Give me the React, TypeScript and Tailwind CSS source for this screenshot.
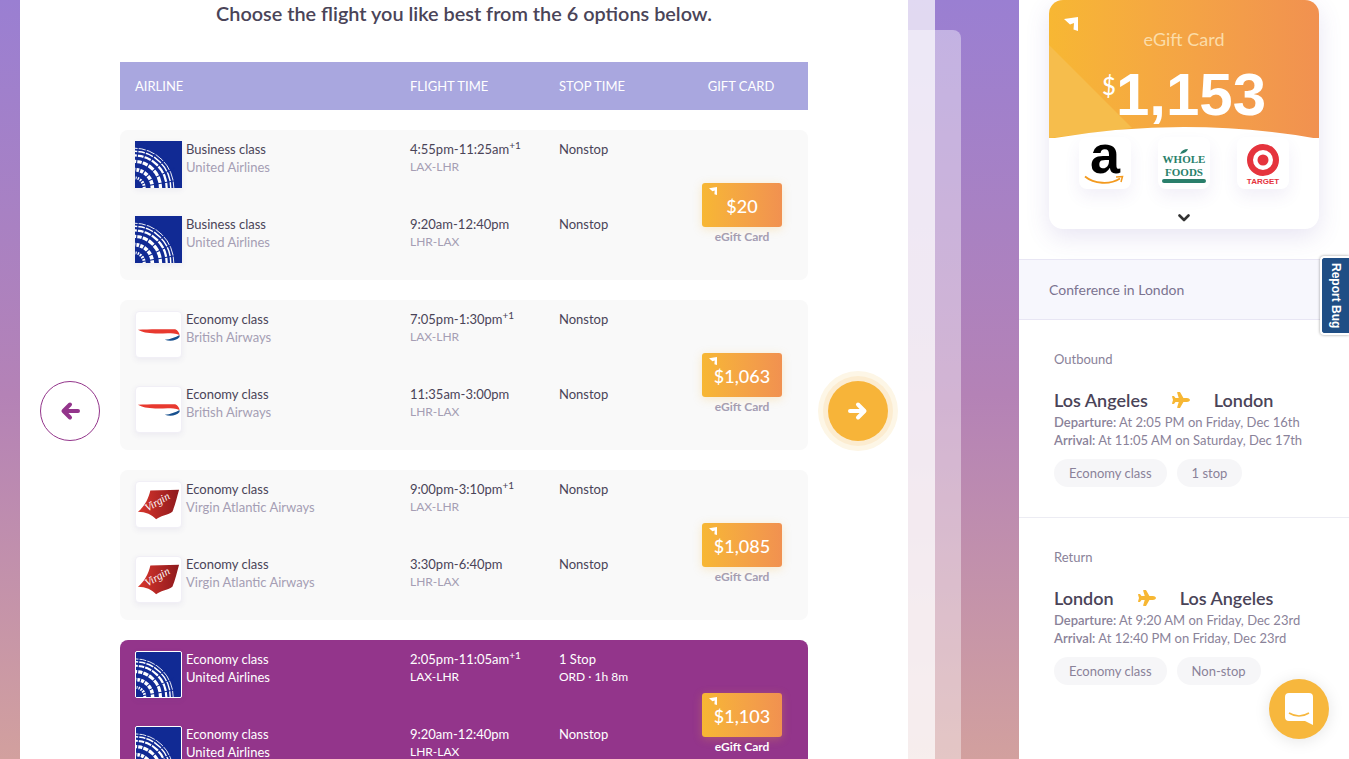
import { FaPlane } from "react-icons/fa";

type Leg = { time: string; plus?: boolean; route: string; stop: string; stopNote?: string };
type Option = { cabin: string; airline: string; logo: "united" | "ba" | "virgin"; price: string; legs: Leg[]; active?: boolean };

const options: Option[] = [
  {
    cabin: "Business class",
    airline: "United Airlines",
    logo: "united",
    price: "$20",
    legs: [
      { time: "4:55pm-11:25am", plus: true, route: "LAX-LHR", stop: "Nonstop" },
      { time: "9:20am-12:40pm", route: "LHR-LAX", stop: "Nonstop" },
    ],
  },
  {
    cabin: "Economy class",
    airline: "British Airways",
    logo: "ba",
    price: "$1,063",
    legs: [
      { time: "7:05pm-1:30pm", plus: true, route: "LAX-LHR", stop: "Nonstop" },
      { time: "11:35am-3:00pm", route: "LHR-LAX", stop: "Nonstop" },
    ],
  },
  {
    cabin: "Economy class",
    airline: "Virgin Atlantic Airways",
    logo: "virgin",
    price: "$1,085",
    legs: [
      { time: "9:00pm-3:10pm", plus: true, route: "LAX-LHR", stop: "Nonstop" },
      { time: "3:30pm-6:40pm", route: "LHR-LAX", stop: "Nonstop" },
    ],
  },
  {
    cabin: "Economy class",
    airline: "United Airlines",
    logo: "united",
    price: "$1,103",
    active: true,
    legs: [
      { time: "2:05pm-11:05am", plus: true, route: "LAX-LHR", stop: "1 Stop", stopNote: "ORD · 1h 8m" },
      { time: "9:20am-12:40pm", route: "LHR-LAX", stop: "Nonstop" },
    ],
  },
];

// globe stripes: white rings round the lower left, cut by blue spokes
const rings = [
  { r: 10, w: 3 },
  { r: 18, w: 3.6 },
  { r: 26, w: 3.2 },
  { r: 32, w: 2.2 },
  { r: 36, w: 1.4 },
  { r: 39, w: 0.9 },
];
const spokes = [10, 26, 42, 58, 72, 84];

function UnitedGlobe() {
  return (
    <svg viewBox="0 0 46 46" className="w-full h-full">
      <rect width="46" height="46" fill="#112a94" />
      <g fill="none">
        {rings.map((ring) => (
          <circle key={ring.r} cx="-1" cy="46" r={ring.r} stroke="#ffffff" strokeWidth={ring.w} />
        ))}
        {spokes.map((deg) => {
          const a = (deg * Math.PI) / 180;
          return (
            <line
              key={deg}
              x1="-1"
              y1="46"
              x2={-1 + 44 * Math.cos(a)}
              y2={46 - 44 * Math.sin(a)}
              stroke="#112a94"
              strokeWidth="1.1"
            />
          );
        })}
      </g>
    </svg>
  );
}

function AirlineLogo({ logo, active }: { logo: Option["logo"]; active?: boolean }) {
  return (
    <div
      className={`w-[47px] h-[47px] shrink-0 overflow-hidden bg-white ${
        logo === "united" ? (active ? "border border-white rounded-[2px]" : "") : "rounded-[4px] border border-[#f1eff6]"
      } shadow-[0_2px_6px_rgba(80,60,140,0.08)]`}
    >
      {logo === "united" && <UnitedGlobe />}
      {logo === "ba" && (
        <svg viewBox="0 0 47 47" className="w-full h-full">
          <path d="M2 18.5 C14 18 30 18 41 18 Q45 20 45.5 24 C36 21 28 23 20 22.5 C12 22 6 21 2 18.5Z" fill="#e8392f" />
          <path d="M30 29 C36 28.5 41 26.5 45.5 24 L45.5 26 C42 30 36 31 30 29Z" fill="#17508f" />
        </svg>
      )}
      {logo === "virgin" && (
        <svg viewBox="0 0 47 47" className="w-full h-full">
          <defs>
            <linearGradient id="virginFlag" x1="0" y1="0" x2="1" y2="0">
              <stop offset="0" stopColor="#d8352c" />
              <stop offset="1" stopColor="#8e1a1d" />
            </linearGradient>
          </defs>
          <path d="M45 8 L15 9 C13 18 8 27 2 31 C10 31 17 34 21 39 C25 35 33 35 38 31 C41 24 43 15 45 8Z" fill="url(#virginFlag)" />
          <text
            x="12"
            y="31"
            fontSize="11.5"
            fontStyle="italic"
            fill="#ffffff"
            fontFamily="'Liberation Serif', serif"
            transform="rotate(-30 12 31)"
          >
            Virgin
          </text>
        </svg>
      )}
    </div>
  );
}

function CardMark({ className }: { className: string }) {
  return (
    <svg viewBox="0 0 14 14" className={className}>
      <path d="M0 2 L14 0 L14 14 L9.5 12.5 L10 6 L6 7.5Z" fill="#ffffff" />
    </svg>
  );
}

function OptionCard({ option }: { option: Option }) {
  const { active } = option;
  return (
    <div className={`flex h-[150px] rounded-lg ${active ? "bg-[#93358b] text-white" : "bg-[#f9f9f9] text-[#4a4458]"}`}>
      <div className="flex-1 pl-[15px] pt-[11px]">
        {option.legs.map((leg) => (
          <div key={leg.route} className="flex h-[75px] text-[13px] leading-[18px]">
            <div className="flex w-[275px] gap-1">
              <AirlineLogo logo={option.logo} active={active} />
              <div className="-mt-[1px]">
                <div>{option.cabin}</div>
                <div className={active ? "text-white" : "text-[#a59eb4]"}>{option.airline}</div>
              </div>
            </div>
            <div className="w-[149px] -mt-[1px]">
              <div>
                {leg.time}
                {leg.plus && <sup className="text-[10px] leading-none">+1</sup>}
              </div>
              <div className={`text-xs leading-[18px] ${active ? "text-white" : "text-[#a59eb4]"}`}>{leg.route}</div>
            </div>
            <div className="-mt-[1px]">
              <div>{leg.stop}</div>
              {leg.stopNote && <div className="text-xs leading-[18px]">{leg.stopNote}</div>}
            </div>
          </div>
        ))}
      </div>
      <div className="w-[132px] flex flex-col items-center pt-[53px]">
        <div className="relative w-20 h-[44px] rounded-[3px] bg-gradient-to-r from-[#f7b733] to-[#f19150] flex items-center justify-center text-white text-lg font-medium shadow-[0_2px_10px_rgba(247,183,51,0.25)]">
          <CardMark className="absolute left-[7px] top-[4px] w-2 h-2" />
          <span className="mt-[2px]">{option.price}</span>
        </div>
        <div className={`mt-[3px] text-xs leading-[14px] font-bold ${active ? "text-white" : "text-[#a59eb4]"}`}>eGift Card</div>
      </div>
    </div>
  );
}

function BrandTiles() {
  return (
    <div className="relative flex justify-center gap-[27px] -mt-[1px]">
      <div className="relative w-[52px] h-[52px] rounded-lg bg-white shadow-[0_8px_16px_rgba(90,70,170,0.08)] flex justify-center">
        <span className="-mt-[9px] font-['Liberation_Sans',sans-serif] font-bold text-[54px] leading-[52px] text-black">a</span>
        <svg viewBox="0 0 40 10" className="absolute left-[5px] top-[38px] w-10 h-[10px]">
          <path d="M1 1.5 C10 9 26 10 36 3.5" fill="none" stroke="#f39a1f" strokeWidth="1.8" />
          <path d="M32 2 L38.5 1.5 L37 7" fill="none" stroke="#f39a1f" strokeWidth="1.5" />
        </svg>
      </div>
      <div className="w-[52px] h-[52px] rounded-lg bg-white shadow-[0_8px_16px_rgba(90,70,170,0.08)] flex flex-col items-center pt-[12px] font-['Liberation_Serif',serif] font-bold text-[#2a7f6b] text-[11px] leading-[13px]">
        <svg viewBox="0 0 10 5" className="w-[10px] h-[5px] -mb-[1px]">
          <path d="M1 5 Q3 0 9 0 Q8 4 1 5Z" fill="#2a7f6b" />
        </svg>
        <span>WHOLE</span>
        <span>FOODS</span>
        <span className="w-[44px] h-1 rounded-full bg-[#2a7f6b]" />
      </div>
      <div className="w-[52px] h-[52px] rounded-lg bg-white shadow-[0_8px_16px_rgba(90,70,170,0.08)] flex flex-col items-center pt-[7px]">
        <svg viewBox="0 0 32 32" className="w-8 h-8">
          <circle cx="16" cy="16" r="13" fill="none" stroke="#e5343d" strokeWidth="6" />
          <circle cx="16" cy="16" r="5.5" fill="#e5343d" />
        </svg>
        <span className="mt-[1px] font-['Liberation_Sans',sans-serif] font-bold text-[8px] leading-[10px] text-[#e5343d]">TARGET</span>
      </div>
    </div>
  );
}

function GiftCard() {
  return (
    <div className="mx-[30px] h-[229px] rounded-[14px] bg-white shadow-[0_8px_24px_rgba(90,70,170,0.14)] overflow-hidden">
      <div className="relative h-[138px] bg-gradient-to-r from-[#f7b733] to-[#f19150] text-white">
        <svg viewBox="0 0 270 138" className="absolute inset-0 w-full h-full">
          <path d="M0 45 L83 128 L0 138Z" fill="#f6bd4c" />
          <path d="M0 139 Q135 115 270 139 L270 138 L0 138Z" fill="#ffffff" />
        </svg>
        <CardMark className="absolute left-[15px] top-[17px] w-[14px] h-[14px]" />
        <div className="relative pt-[27px] text-center text-lg leading-6 text-[#fbdca8]">eGift Card</div>
        <div className="relative flex justify-center mt-[9px] font-['Liberation_Sans',sans-serif] font-bold text-[60px] leading-[70px]">
          <span className="font-['Lato',sans-serif] font-medium text-[24px] leading-[34px] mt-[9px]">$</span>
          <span>1,153</span>
        </div>
      </div>
      <BrandTiles />
      <div className="flex justify-center mt-[25px]">
        <svg viewBox="0 0 12 8" className="w-3 h-2">
          <path d="M1.5 1.5 L6 6 L10.5 1.5" fill="none" stroke="#333333" strokeWidth="2.6" strokeLinecap="round" strokeLinejoin="round" />
        </svg>
      </div>
    </div>
  );
}

function TripLeg({
  label,
  from,
  to,
  departure,
  arrival,
  chips,
}: {
  label: string;
  from: string;
  to: string;
  departure: string;
  arrival: string;
  chips: string[];
}) {
  return (
    <div className="h-[198px] px-[35px] pt-[30px] border-b border-[#ececf3] last:border-b-0 text-[#8a8299]">
      <div className="text-[13px] leading-[18px]">{label}</div>
      <div className="mt-[19px] flex items-center gap-6 text-lg leading-[26px] font-semibold text-[#4a4458]">
        <span>{from}</span>
        <FaPlane className="w-[18px] h-[18px] text-[#f7b733]" />
        <span>{to}</span>
      </div>
      <div className="text-[13px] leading-[18px]">
        <div>
          <b className="font-semibold">Departure:</b> {departure}
        </div>
        <div>
          <b className="font-semibold">Arrival:</b> {arrival}
        </div>
      </div>
      <div className="mt-[10px] flex gap-[10px]">
        {chips.map((chip) => (
          <span key={chip} className="h-7 px-[15px] rounded-full bg-[#f6f6f8] text-[13px] leading-7">
            {chip}
          </span>
        ))}
      </div>
    </div>
  );
}

export default function App() {
  return (
    <div className="relative h-screen overflow-hidden flex justify-between pl-5 font-['Lato',sans-serif] bg-gradient-to-b from-[#9a7fd2] via-[#b482b6] via-[52%] to-[#d2a09e]">
      <div className="relative h-full">
        <div className="absolute left-[888px] top-0 bottom-0 w-[27px] bg-white/70" />
        <div className="absolute left-[860px] top-[30px] bottom-0 w-[81px] rounded-tr-lg bg-white/40" />
        <div className="relative h-full w-[888px] bg-white flex gap-5 px-5">
          <button className="self-start mt-[381px] w-[60px] h-[60px] shrink-0 rounded-full border border-[#93358b] flex items-center justify-center">
            <svg viewBox="0 0 20 20" className="w-5 h-5">
              <path d="M18 10 H4 M10 3.5 L3.5 10 L10 16.5" fill="none" stroke="#93358b" strokeWidth="4" strokeLinecap="round" strokeLinejoin="round" />
            </svg>
          </button>
          <div className="w-[688px] shrink-0">
            <h1 className="-mt-[1px] text-center text-[19.85px] leading-7 font-semibold text-[#4a4458]">
              Choose the flight you like best from the 6 options below.
            </h1>
            <div className="mt-[35px] flex items-center h-12 pl-[15px] pt-[1px] bg-[#a9a7df] text-[13px] text-white uppercase">
              <span className="w-[275px]">Airline</span>
              <span className="w-[149px]">Flight time</span>
              <span className="w-[120px]">Stop time</span>
              <span className="w-[124px] text-center">Gift card</span>
            </div>
            <div className="mt-5 flex flex-col gap-5">
              {options.map((option) => (
                <OptionCard key={option.price} option={option} />
              ))}
            </div>
          </div>
          <button className="self-start mt-[381px] w-[60px] h-[60px] shrink-0 rounded-full bg-[#f7b439] shadow-[0_0_0_5px_#fcecd0,0_0_0_10px_#fdf6e6] flex items-center justify-center">
            <svg viewBox="0 0 20 20" className="w-5 h-5">
              <path d="M2 10 H16 M10 3.5 L16.5 10 L10 16.5" fill="none" stroke="#ffffff" strokeWidth="4" strokeLinecap="round" strokeLinejoin="round" />
            </svg>
          </button>
        </div>
      </div>

      <aside className="w-[330px] h-full bg-white">
        <GiftCard />
        <div className="mt-[30px] h-[61px] px-[30px] flex items-center border-y border-[#e8e6f4] bg-[#f7f7fd] text-sm text-[#7b7390]">
          Conference in London
        </div>
        <TripLeg
          label="Outbound"
          from="Los Angeles"
          to="London"
          departure="At 2:05 PM on Friday, Dec 16th"
          arrival="At 11:05 AM on Saturday, Dec 17th"
          chips={["Economy class", "1 stop"]}
        />
        <TripLeg
          label="Return"
          from="London"
          to="Los Angeles"
          departure="At 9:20 AM on Friday, Dec 23rd"
          arrival="At 12:40 PM on Friday, Dec 23rd"
          chips={["Economy class", "Non-stop"]}
        />
      </aside>

      <div className="absolute right-0 top-[256px] w-[29px] h-[79px] rounded-l-[4px] border-2 border-r-0 border-white bg-[#1f4e85] shadow-[0_0_3px_rgba(0,0,0,0.4)] flex items-center justify-center font-['Liberation_Sans',sans-serif] font-bold text-xs text-white [writing-mode:vertical-rl]">
        Report Bug
      </div>

      <button className="absolute left-[1269px] top-[679px] w-[60px] h-[60px] rounded-full bg-[#f7b73d] shadow-[0_2px_16px_rgba(0,0,0,0.1)] flex items-center justify-center">
        <svg viewBox="0 0 28 32" className="w-7 h-8">
          <path d="M4 0 H24 Q28 0 28 4 V32 L20 28 H4 Q0 28 0 24 V4 Q0 0 4 0Z" fill="#ffffff" />
          <path d="M4 20 Q14 26 24 20" fill="none" stroke="#f7b73d" strokeWidth="1.5" />
        </svg>
      </button>
    </div>
  );
}
